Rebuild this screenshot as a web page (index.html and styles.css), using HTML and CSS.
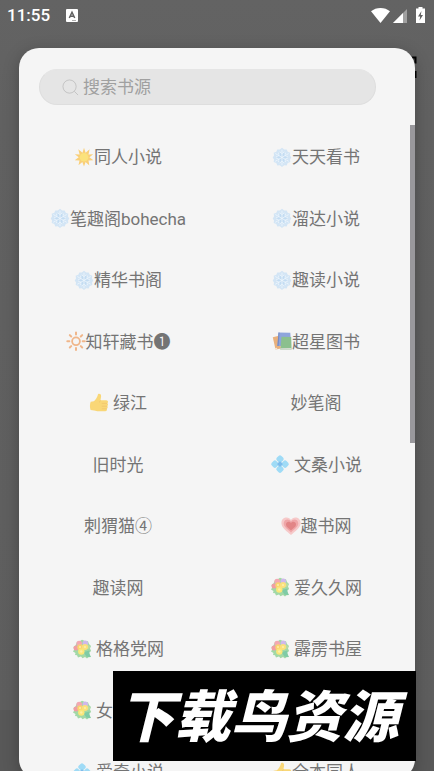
FILE: index.html
```html
<!DOCTYPE html>
<html lang="zh-CN">
<head>
<meta charset="utf-8">
<meta name="viewport" content="width=device-width, initial-scale=1">
<title>搜索书源</title>
<link rel="stylesheet" href="styles.css">
</head>
<body>
<svg class="symbols" aria-hidden="true">
  <symbol id="sun" viewBox="0 0 20 20">
    <path fill="#f9cf78" d="M10 .8l1.600 4.900L15.600 2.200l-1.100 5.200L19.200 7.300 15.400 10.300l4 3-4.900.2.800 5-3.700-3.400L10 19.400l-1.700-4.300L4.500 18.300l1-4.900-4.800-.2 4-2.900L.8 7.200l4.800.3L4.300 2.300l4.200 3.400z"/>
    <circle cx="10" cy="10.300" r="4.300" fill="#fbe27c"/>
  </symbol>
  <symbol id="snow" viewBox="0 0 20 20">
    <path fill="#d3e5f5" d="M10 .8l2.200 1.800 2.500-.1 1 2.300 2.600 1-.3 2.700 1.300 1.900-1.300 2 .3 2.700-2.600 1-1 2.300-2.500-.1L10 20l-2.200-1.700-2.500.1-1-2.300-2.600-1 .3-2.700-1.300-2L2 8.500l-.3-2.700 2.600-1 1-2.300 2.500.1z"/>
    <path fill="#c3dcf2" d="M10 5l4.700 2.700v5.400L10 15.800l-4.700-2.700V7.700z"/>
    <path fill="none" stroke="#eff6fc" stroke-width=".8" stroke-linecap="round" d="M10 3v14.800M3.600 6.700l12.800 7.400M16.400 6.700L3.600 14.100M8 5l2 1.600L12 5M8 15.800l2-1.600 2 1.600M4.600 9.500l2.400-.9-.4-2.500M15.400 9.500L13 8.600l.4-2.500M4.600 11.300l2.400.9-.4 2.500M15.400 11.300l-2.400.9.4 2.500"/>
  </symbol>
  <symbol id="bright" viewBox="0 0 20 20">
    <circle cx="10" cy="10.300" r="3.900" fill="none" stroke="#f0b68a" stroke-width="1.800"/>
    <path fill="none" stroke="#f0b68a" stroke-width="2" stroke-linecap="round" d="M10 1.600v2M10 17v2M1.300 10.300h2M16.700 10.300h2M3.800 4.100l1.400 1.400M14.800 15.100l1.400 1.400M16.200 4.100l-1.400 1.400M5.200 15.100l-1.400 1.400"/>
  </symbol>
  <symbol id="books" viewBox="0 0 20 20">
    <path fill="#e8b07c" d="M.8 6.300L7 4.800l2 12.800-5.500 1z"/>
    <path fill="#f6e5d2" d="M2.600 17.300l2.400-.5.300 1.500-2.200.4z"/>
    <path fill="#8ea5dc" d="M6.500 1.400l11.800.4.800 13L5.500 15z"/>
    <path fill="#768bc4" d="M6.500 1.400l1 .1-.8 13.500H5.300z"/>
    <path fill="#8bc08e" d="M9.500 5.700l9.700.3.400 12.400-11.200.3z"/>
    <path fill="#d9ddd6" d="M8.500 17.200l11-.2.100 1.400-11.200.3z"/>
  </symbol>
  <symbol id="thumb" viewBox="0 0 20 20">
    <path fill="#f9d777" d="M9 1.200c1.400-1 3.100 0 3.100 1.800 0 1.900-.7 3.200-.5 4.300h5.700c2 0 2.300 2.400.9 3 1.300.6 1.100 2.500-.1 2.800 1 .6.800 2.300-.4 2.600.7 1-.1 2.600-1.400 2.600H9.700c-2 0-2.800-.8-4.600-.9L1.600 17c-.9-2.300-.9-5.500.1-8.200l3.200-.5c1.600-1.600 3.700-4.200 4.100-7.100z"/>
    <path fill="none" stroke="#ecc06a" stroke-width=".6" d="M12.800 10.400h5.500M12.800 13.200h5.400M12.800 15.800h5M11.500 7.500c-.2.900-.7 1.400-1.500 1.900"/>
  </symbol>
  <symbol id="diamond" viewBox="0 0 20 20">
    <g fill="#9fdbf6">
      <rect x="6.800" y="1.800" width="6.400" height="6.400" rx="2" transform="rotate(45 10 5)"/>
      <rect x="6.800" y="12" width="6.400" height="6.400" rx="2" transform="rotate(45 10 15.200)"/>
      <rect x="1.700" y="6.900" width="6.400" height="6.400" rx="2" transform="rotate(45 4.900 10.100)"/>
      <rect x="11.900" y="6.900" width="6.400" height="6.400" rx="2" transform="rotate(45 15.100 10.100)"/>
    </g>
    <rect x="7.800" y="7.900" width="4.400" height="4.400" rx="1.200" fill="#7fbdec" transform="rotate(45 10 10.100)"/>
  </symbol>
  <symbol id="heart" viewBox="0 0 20 20">
    <path fill="#f6c9c9" d="M10 4C12-.1 19.600.7 19.600 7c0 5-5.700 8.300-9.600 12C6.100 15.300.4 12 .4 7 .4.700 8 0 10 4z"/>
    <path fill="#efa6a8" d="M10 5.600c1.800-3.300 7.300-2.700 7.300 1.900 0 3.500-4.400 6.100-7.300 8.900-2.900-2.800-7.300-5.400-7.300-8.900C2.700 2.900 8.200 2.300 10 5.600z"/>
    <path fill="#e28586" d="M10 7.300c1.200-2.300 5-1.900 5 1.200 0 2.400-3 4-5 5.800-2-1.800-5-3.400-5-5.800 0-3.100 3.800-3.500 5-1.200z"/>
  </symbol>
  <symbol id="flowers" viewBox="0 0 20 20">
    <path fill="#a2d8a6" d="M1.500 8l2-1.500L5 3l3-1 2-1.200L13 2l3 .3 1 2.700 2 2-1 2.500 1.200 2.500-2 1.500L18 16l1 2-2.500.2L15 19.500l-2-1.500-2.500 1.300L9 17.500l-3 1-1-2.300-2-.2.500-2L1 12.500l1.200-2z"/>
    <path fill="#7fcba6" d="M11.500 13l6-1.500-.3 3 1.500 3.500-4.200-.2z"/>
    <circle cx="7.200" cy="4.600" r="2.800" fill="#f3a8b2"/>
    <circle cx="13.300" cy="4.200" r="2.700" fill="#cfb8ec"/>
    <circle cx="4" cy="9" r="2.500" fill="#f09ea3"/>
    <circle cx="16" cy="8" r="2" fill="#bcdca0"/>
    <circle cx="8.200" cy="8.200" r="2.900" fill="#fad270"/>
    <circle cx="13" cy="8" r="3" fill="#fbe07c"/>
    <circle cx="9.300" cy="12.600" r="3.200" fill="#fbe679"/>
    <g fill="#fdefa8"><circle cx="8" cy="8" r="1"/><circle cx="13" cy="8" r="1.100"/><circle cx="9.300" cy="12.500" r="1.200"/></g>
  </symbol>
</svg>

<header class="status">
  <time class="clock">11:55</time>
  <svg class="notice" viewBox="0 0 12 13" aria-hidden="true">
    <rect width="12" height="13" rx="1" fill="#fff"/>
    <path fill="none" stroke="#606060" stroke-width="1.500" d="M3.300 9L6 3.200 8.700 9M4.300 7.300h3.400"/>
    <path stroke="#606060" stroke-width="1" d="M6.500 11.500h1M8.500 11.500h1"/>
  </svg>
  <svg class="signals" viewBox="0 0 55 17" aria-hidden="true">
    <path fill="#fff" d="M0 4.300C5-.2 14-.2 19 4.300L9.500 16z"/>
    <path fill="#a0a0a0" d="M36 2v14H22z"/>
    <path fill="#fff" d="M32 6v10H22z"/>
    <path fill="#fff" d="M47.500 0h4v1.500H54V16h-9V1.500h2.500z"/>
    <path fill="#606060" d="M50.500 4L47 9.500h2.200L48.500 13.500 52 8h-2.200z"/>
  </svg>
</header>

<svg class="menu" viewBox="0 0 8 24" aria-hidden="true">
  <path fill="none" stroke="#000" stroke-width="2" d="M0 2.500h6.500v6M6.500 16v6H0"/>
</svg>

<main class="dialog">
  <label class="search">
    <svg viewBox="0 0 18 18" aria-hidden="true"><circle cx="8" cy="8" r="7" fill="none" stroke="#c2c2c2"/><path stroke="#c2c2c2" d="M13 13l4 4"/></svg>
    <input type="search" placeholder="搜索书源" aria-label="搜索书源">
  </label>
  <div class="sources">
    <button><svg><use href="#sun"/></svg>同人小说</button>
    <button><svg><use href="#snow"/></svg>天天看书</button>
    <button><svg><use href="#snow"/></svg>笔趣阁bohecha</button>
    <button><svg><use href="#snow"/></svg>溜达小说</button>
    <button><svg><use href="#snow"/></svg>精华书阁</button>
    <button><svg><use href="#snow"/></svg>趣读小说</button>
    <button><svg><use href="#bright"/></svg>知轩藏书❶</button>
    <button><svg><use href="#books"/></svg>超星图书</button>
    <button class="spaced"><svg><use href="#thumb"/></svg>绿江</button>
    <button>妙笔阁</button>
    <button>旧时光</button>
    <button class="spaced"><svg><use href="#diamond"/></svg>文桑小说</button>
    <button>刺猬猫④</button>
    <button><svg><use href="#heart"/></svg>趣书网</button>
    <button>趣读网</button>
    <button class="spaced"><svg><use href="#flowers"/></svg>爱久久网</button>
    <button class="spaced"><svg><use href="#flowers"/></svg>格格党网</button>
    <button class="spaced"><svg><use href="#flowers"/></svg>霹雳书屋</button>
    <button class="spaced"><svg><use href="#flowers"/></svg><span class="name">女</span></button>
    <span></span>
    <button class="spaced"><svg><use href="#diamond"/></svg>爱奇小说</button>
    <button><svg><use href="#thumb"/></svg>全本同人</button>
  </div>
  <div class="scrollbar"></div>
</main>

<aside class="banner">下载鸟资源</aside>
</body>
</html>
```
FILE: styles.css
```css
* {
  box-sizing: border-box;
}

body {
  margin: 0;
  height: 100vh;
  overflow: hidden;
  position: relative;
  background: linear-gradient(#636363 0, #616161 119px, #5e5e5e 710px, #585858 710px);
  font-family: Roboto, "Noto Sans CJK SC", sans-serif;
  font-size: 17px;
  color: #747474;
}

.symbols {
  position: absolute;
  width: 0;
  height: 0;
}

.status {
  display: flex;
  align-items: center;
  height: 30px;
  margin-bottom: 18px;
  padding: 0 8px 0 7px;
  color: #fff;
}

.clock {
  font-weight: 500;
}

.notice {
  width: 12px;
  height: 13px;
  margin-left: 16px;
}

.signals {
  width: 55px;
  height: 17px;
  margin-left: auto;
}

.menu {
  position: absolute;
  top: 55px;
  right: 17px;
  width: 8px;
  height: 24px;
}

.dialog {
  position: relative;
  height: calc(100vh - 40px);
  margin: 0 19px;
  padding-top: 21px;
  overflow: hidden;
  border-radius: 20px;
  background: #f5f5f5;
  box-shadow: 0 4px 16px rgba(0, 0, 0, 0.25);
}

.search {
  display: flex;
  align-items: center;
  gap: 4px;
  height: 36px;
  margin: 0 39px 20px 20px;
  padding: 0 22px;
  border: 1px solid #dedede;
  border-top-color: #e5e5e5;
  border-radius: 18px;
  background: #e5e5e5;
}

.search svg {
  flex: none;
  width: 17px;
  height: 17px;
}

.search input {
  flex: 1;
  min-width: 0;
  padding: 0;
  border: 0;
  outline: 0;
  background: none;
  font: inherit;
  color: #747474;
}

.search input::placeholder {
  color: #a0a0a0;
}

.sources {
  display: grid;
  grid-template-columns: 1fr 1fr;
  grid-template-rows: repeat(6, 61px 62px);
}

.sources button {
  display: flex;
  align-items: center;
  justify-content: center;
  padding: 0;
  border: 0;
  background: none;
  font: inherit;
  color: inherit;
}

.sources svg {
  width: 20px;
  height: 20px;
  margin-top: 2px;
}

.sources .spaced {
  gap: 4px;
}

.name {
  min-width: 68px;
  text-align: left;
}

.scrollbar {
  position: absolute;
  top: 77px;
  right: 0;
  width: 5px;
  height: 318px;
  background: #99989c;
}

.banner {
  position: absolute;
  right: 18px;
  bottom: 10px;
  display: flex;
  align-items: center;
  justify-content: center;
  width: 303px;
  height: 90px;
  padding: 0 12px 6px 0;
  background: #000;
  color: #fff;
  font-family: "Noto Sans CJK SC", sans-serif;
  font-size: 56px;
  font-style: italic;
  font-weight: 900;
  line-height: 1;
}
```
